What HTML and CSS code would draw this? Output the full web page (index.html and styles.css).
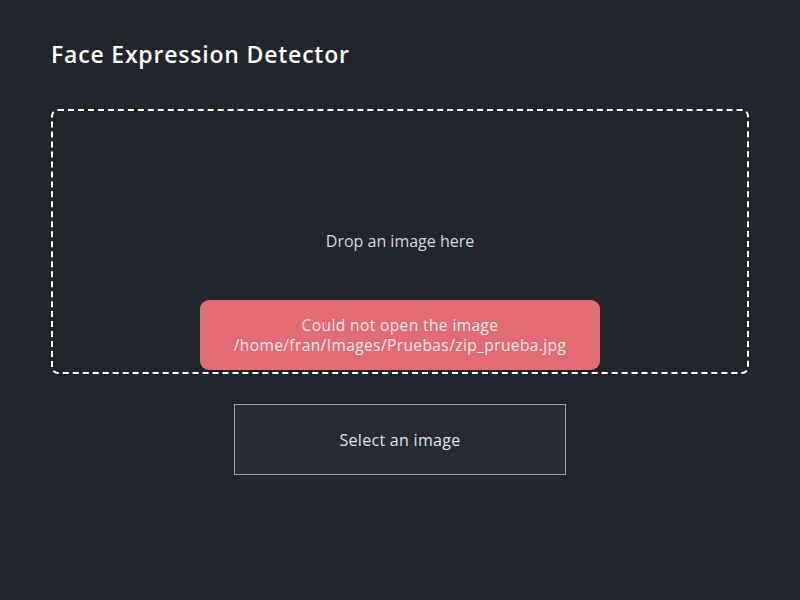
FILE: index.html
```html
<!DOCTYPE html>
<html lang="en">
<head>
<meta charset="utf-8">
<title>Face Expression Detector</title>
<link rel="stylesheet" href="styles.css">
</head>
<body>
<main class="app">
  <h1 class="title">Face Expression Detector</h1>
  <section class="dropzone">
    <p class="drop-label">Drop an image here</p>
    <div class="toast">
      <span class="toast-line">Could not open the image</span>
      <span class="toast-line">/home/fran/Images/Pruebas/zip_prueba.jpg</span>
    </div>
  </section>
  <div class="actions">
    <button class="select-btn" type="button">Select an image</button>
  </div>
</main>
</body>
</html>
```
FILE: styles.css
```css
html, body {
  margin: 0;
  padding: 0;
  background: #22252c;
  height: 100%;
}
body {
  font-family: "Open Sans", "Lato", sans-serif;
  color: #d4d7dd;
}
.app {
  padding: 0 51px;
  display: flex;
  flex-direction: column;
}
.title {
  margin: 40px 0 0;
  height: 29px;
  font-family: "Open Sans", sans-serif;
  font-weight: 600;
  font-size: 23px;
  line-height: 29px;
  color: #ffffff;
  letter-spacing: 0.8px;
}
.dropzone {
  position: relative;
  margin-top: 40px;
  height: 261px;
  border: 2px dashed #ffffff;
  border-radius: 7px;
  display: flex;
  align-items: center;
  justify-content: center;
}
.drop-label {
  margin: 0;
  font-size: 16px;
  color: #d4d7dd;
  transform: translateY(-1px);
}
.toast {
  position: absolute;
  left: 147px;
  right: 147px;
  bottom: 2px;
  height: 70px;
  box-sizing: border-box;
  background: #e06c75;
  border-radius: 9px;
  color: #fbe9ea;
  font-size: 15.5px;
  line-height: 20px;
  letter-spacing: 0.4px;
  display: flex;
  flex-direction: column;
  align-items: center;
  justify-content: center;
  text-align: center;
}
.toast-line {
  display: block;
  white-space: nowrap;
}
.actions {
  display: flex;
  justify-content: center;
  margin-top: 30px;
}
.select-btn {
  width: 332px;
  height: 71px;
  background: #282b34;
  border: 1px solid #9aa1ad;
  color: #dfe2e7;
  font-family: "Open Sans", "Lato", sans-serif;
  font-size: 16px;
  letter-spacing: 0.3px;
  padding: 0;
}
```
